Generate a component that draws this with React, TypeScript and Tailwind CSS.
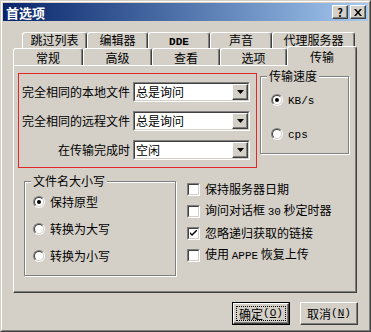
import type { ReactNode } from "react";

const raised =
  "border border-t-white border-l-white border-r-[#404040] border-b-[#404040] shadow-[inset_-1px_-1px_0_#808080]";
const latin = "font-['Liberation_Mono',monospace] text-[11px]";

function Tab({ w, children, active, back }: { w: string; children: ReactNode; active?: boolean; back?: boolean }) {
  return (
    <div
      className={
        "shrink-0 rounded-t-[3px] border-t border-l border-r border-t-white border-l-white border-r-[#404040] shadow-[inset_-1px_0_0_#808080] bg-[#d4d0c8] text-center " +
        w +
        (active
          ? " relative z-10 h-[20px] -mb-[1px] pt-[3px] leading-[13px]"
          : back
            ? " h-full pt-[1px] leading-[12px]"
            : " h-full pt-[2px] leading-[14px]")
      }
    >
      {children}
    </div>
  );
}

function Combo({ value }: { value: string }) {
  return (
    <div className="w-[117px] h-[20px] flex items-center bg-white border border-t-[#808080] border-l-[#808080] border-r-white border-b-white">
      <div className="flex-1 h-full flex items-center border border-t-[#404040] border-l-[#404040] border-r-[#d4d0c8] border-b-[#d4d0c8]">
        <span className="flex-1 pl-[1px] leading-none">{value}</span>
        <div className={"w-[16px] h-[16px] bg-[#d4d0c8] flex items-center justify-center " + raised}>
          <svg width="7" height="4" viewBox="0 0 7 4">
            <path d="M0 0h7L3.5 4z" fill="#000" />
          </svg>
        </div>
      </div>
    </div>
  );
}

function Radio({ checked, children }: { checked?: boolean; children: ReactNode }) {
  return (
    <div className="flex items-center h-[16px] gap-[5px]">
      <div className="w-[12px] h-[12px] rounded-full border border-t-[#808080] border-l-[#808080] border-r-white border-b-white">
        <div className="w-full h-full rounded-full bg-white border border-t-[#404040] border-l-[#404040] border-r-[#d4d0c8] border-b-[#d4d0c8] flex items-center justify-center">
          {checked && <div className="w-[4px] h-[4px] rounded-full bg-black" />}
        </div>
      </div>
      <span className="leading-none">{children}</span>
    </div>
  );
}

function Check({ checked, children }: { checked?: boolean; children: ReactNode }) {
  return (
    <div className="flex items-center h-[22px] gap-[5px]">
      <div className="w-[13px] h-[13px] border border-t-[#808080] border-l-[#808080] border-r-white border-b-white">
        <div className="w-full h-full bg-white border border-t-[#404040] border-l-[#404040] border-r-[#d4d0c8] border-b-[#d4d0c8] flex items-center justify-center">
          {checked && (
            <svg width="7" height="7" viewBox="0 0 7 7">
              <path d="M0 2v2l2 2 5-5V-1L2 4z" fill="#000" />
            </svg>
          )}
        </div>
      </div>
      <span className="leading-none whitespace-nowrap">{children}</span>
    </div>
  );
}

function Group({ title, className, children }: { title: string; className: string; children: ReactNode }) {
  return (
    <div
      className={
        "relative shrink-0 border border-[#808080] shadow-[inset_1px_1px_0_white,1px_1px_0_white] " + className
      }
    >
      <span className="absolute -top-[8px] left-[6px] px-[2px] bg-[#d4d0c8] leading-[14px]">{title}</span>
      {children}
    </div>
  );
}

export default function App() {
  return (
    <div className="w-[371px] h-[332px] bg-[#d4d0c8] text-black text-[12px] font-['Noto_Sans_CJK_SC','Liberation_Sans',sans-serif] border border-t-[#d4d0c8] border-l-[#d4d0c8] border-r-[#404040] border-b-[#404040]">
      <div className="w-full h-full flex flex-col p-[1px] border border-t-white border-l-white border-r-[#808080] border-b-[#808080]">
        {/* title bar */}
        <div className="h-[18px] shrink-0 flex items-center bg-gradient-to-r from-[#0a246a] to-[#a6caf0] pl-[3px] pr-[2px]">
          <span className="flex-1 text-white font-bold text-[13px] leading-none">首选项</span>
          <div className="flex gap-[2px]">
            <div className={"w-[16px] h-[14px] bg-[#d4d0c8] flex items-center justify-center font-bold text-[11px] leading-none " + raised}>
              ?
            </div>
            <div className={"w-[16px] h-[14px] bg-[#d4d0c8] flex items-center justify-center " + raised}>
              <svg width="8" height="7" viewBox="0 0 8 7">
                <path d="M0 0h2l2 2.5L6 0h2L5 3.5 8 7H6L4 4.5 2 7H0l3-3.5z" fill="#000" />
              </svg>
            </div>
          </div>
        </div>

        {/* tabs */}
        <div className="flex h-[16px] mt-[11px] ml-[19px]">
          <Tab w="w-[65px]" back>跳过列表</Tab>
          <Tab w="w-[61px]" back>编辑器</Tab>
          <Tab w="w-[62px]" back>
            <span className={latin + " font-bold"}>DDE</span>
          </Tab>
          <Tab w="w-[62px]" back>声音</Tab>
          <Tab w="w-[83px]" back>代理服务器</Tab>
        </div>
        <div className="flex items-end h-[17px] ml-[10px]">
          <Tab w="w-[70px]">常规</Tab>
          <Tab w="w-[69px]">高级</Tab>
          <Tab w="w-[68px]">查看</Tab>
          <Tab w="w-[67px]">选项</Tab>
          <Tab w="w-[70px]" active>
            传输
          </Tab>
        </div>

        {/* panel */}
        <div className={"w-[344px] h-[228px] ml-[10px] shrink-0 flex flex-col " + raised}>
          <div className="flex items-start">
            <div className="ml-[4px] mt-[7px] w-[239px] h-[95px] border border-[#e02828] pt-[8px] flex flex-col gap-[9px]">
              {[
                ["完全相同的本地文件", "总是询问"],
                ["完全相同的远程文件", "总是询问"],
                ["在传输完成时", "空闲"],
              ].map(([label, value]) => (
                <div key={label} className="flex items-center gap-[3px]">
                  <span className="w-[111px] text-right leading-none">{label}</span>
                  <Combo value={value} />
                </div>
              ))}
            </div>
            <Group title="传输速度" className="ml-[3px] mt-[10px] w-[89px] h-[78px] pt-[15px] pl-[10px] flex flex-col gap-[18px]">
              <Radio checked>
                <span className={latin}>KB/s</span>
              </Radio>
              <Radio>
                <span className={latin}>cps</span>
              </Radio>
            </Group>
          </div>

          <div className="flex items-start mt-[10px]">
            <Group title="文件名大小写" className="ml-[10px] mt-[3px] w-[152px] h-[95px] pt-[12px] pl-[8px] flex flex-col gap-[11px]">
              <Radio checked>保持原型</Radio>
              <Radio>转换为大写</Radio>
              <Radio>转换为小写</Radio>
            </Group>
            <div className="ml-[11px] flex flex-col">
              <Check>保持服务器日期</Check>
              <Check>
                询问对话框 <span className={latin}>30</span> 秒定时器
              </Check>
              <Check checked>忽略递归获取的链接</Check>
              <Check>
                使用 <span className={latin}>APPE</span> 恢复上传
              </Check>
            </div>
          </div>
        </div>

        {/* buttons */}
        <div className="flex justify-end gap-[10px] mt-[9px] mr-[10px]">
          <div className="w-[58px] h-[23px] border border-black">
            <div className={"w-full h-full flex items-center justify-center p-[2px] " + raised}>
              <div className="w-full h-full flex items-center justify-center border border-dotted border-black leading-none">
                确定<span className={latin}>(<u>O</u>)</span>
              </div>
            </div>
          </div>
          <div className={"w-[58px] h-[23px] flex items-center justify-center leading-none " + raised}>
            取消<span className={latin}>(<u>N</u>)</span>
          </div>
        </div>
      </div>
    </div>
  );
}
